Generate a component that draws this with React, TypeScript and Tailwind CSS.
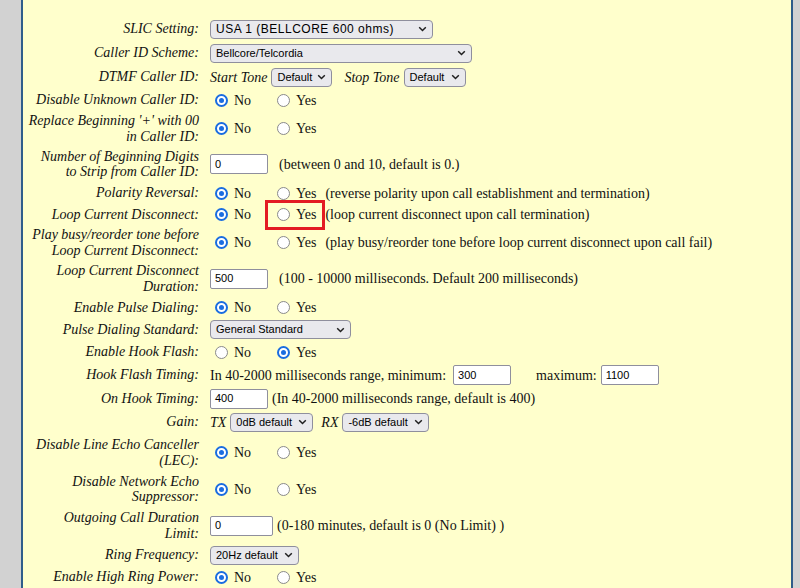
import type { ReactNode } from 'react'

const serif = "font-['Liberation_Serif',serif]"
const sans = "font-['Liberation_Sans',Arial,sans-serif]"

function Chevron() {
  return (
    <svg width="9" height="6" viewBox="0 0 9 6" className="ml-[4px] shrink-0">
      <path d="M1.2 1.3l3.3 3.2 3.3-3.2" fill="none" stroke="#1f1f1f" strokeWidth="1.5" />
    </svg>
  )
}

function Select({ text, w, t = 'text-[11px]' }: { text: string; w: string; t?: string }) {
  return (
    <span
      className={`inline-flex h-[19px] shrink-0 items-center justify-between rounded-[4px] border border-[#8f8f9d] bg-[#e9e9ed] pl-[5px] pr-[5px] leading-none text-black ${sans} ${w}`}
    >
      <span className={t}>{text}</span>
      <Chevron />
    </span>
  )
}

function Field({ value, w }: { value: string; w: string }) {
  return (
    <span
      className={`inline-flex h-[20px] shrink-0 items-center rounded-[2px] border border-[#8f8f9d] bg-white pl-[4px] text-[11px] leading-none text-black ${sans} ${w}`}
    >
      {value}
    </span>
  )
}

function Radio({ on }: { on: boolean }) {
  if (on)
    return (
      <span className="ml-[5px] box-border flex h-[13px] w-[13px] shrink-0 items-center justify-center rounded-full border-2 border-[#1a6de0] bg-white">
        <span className="h-[5px] w-[5px] rounded-full bg-[#1a6de0]" />
      </span>
    )
  return <span className="ml-[5px] box-border h-[13px] w-[13px] shrink-0 rounded-full border-[1.5px] border-[#8a8a8a] bg-white" />
}

function YesNo({ yes = false, note, boxed = false }: { yes?: boolean; note?: string; boxed?: boolean }) {
  return (
    <div className="flex items-center">
      <span className="flex w-[62px] items-center">
        <Radio on={!yes} />
        <span className="ml-[6px]">No</span>
      </span>
      <span className="relative flex items-center">
        <Radio on={yes} />
        <span className="ml-[6px]">Yes</span>
        {boxed && (
          <span className="absolute left-[-7px] top-1/2 h-[30px] w-[60px] -translate-y-1/2 border-[3px] border-[#e31b23]" />
        )}
      </span>
      {note && <span className="ml-[9px] whitespace-nowrap">{note}</span>}
    </div>
  )
}

function Row({ label, h, children }: { label: ReactNode; h: string; children: ReactNode }) {
  return (
    <div className={`grid grid-cols-[176px_1fr] items-center gap-x-[11px] ${h}`}>
      <div className="whitespace-nowrap text-right italic leading-[15.5px]">{label}</div>
      <div className="flex items-center whitespace-nowrap">{children}</div>
    </div>
  )
}

export default function App() {
  return (
    <div className="h-[588px] w-[800px] overflow-hidden bg-[#d2d2d2] pl-[21px] pr-[7px]">
      <div className={`h-full border-x-2 border-[#2f5d8a] bg-[#ffffcc] pt-[17px] text-[14px] text-[#111] ${serif}`}>
        <Row label="SLIC Setting:" h="h-[24px]">
          <Select text="USA 1 (BELLCORE 600 ohms)" w="w-[223px]" t="text-[12px] tracking-[0.5px]" />
        </Row>
        <Row label="Caller ID Scheme:" h="h-[24px]">
          <Select text="Bellcore/Telcordia" w="w-[262px]" />
        </Row>
        <Row label="DTMF Caller ID:" h="h-[24px]">
          <span className="italic">Start Tone</span>
          <span className="ml-[4px] flex">
            <Select text="Default" w="w-[61px]" />
          </span>
          <span className="ml-[12px] italic">Stop Tone</span>
          <span className="ml-[4px] flex">
            <Select text="Default" w="w-[62px]" />
          </span>
        </Row>
        <Row label="Disable Unknown Caller ID:" h="h-[22px]">
          <YesNo />
        </Row>
        <Row
          label={
            <>
              Replace Beginning &apos;+&apos; with 00
              <br />
              in Caller ID:
            </>
          }
          h="h-[35px]"
        >
          <YesNo />
        </Row>
        <Row
          label={
            <>
              Number of Beginning Digits
              <br />
              to Strip from Caller ID:
            </>
          }
          h="h-[36px]"
        >
          <Field value="0" w="w-[58px]" />
          <span className="ml-[11px]">(between 0 and 10, default is 0.)</span>
        </Row>
        <Row label="Polarity Reversal:" h="h-[22px]">
          <YesNo note="(reverse polarity upon call establishment and termination)" />
        </Row>
        <Row label="Loop Current Disconnect:" h="h-[21px]">
          <YesNo boxed note="(loop current disconnect upon call termination)" />
        </Row>
        <Row
          label={
            <>
              Play busy/reorder tone before
              <br />
              Loop Current Disconnect:
            </>
          }
          h="h-[35px]"
        >
          <YesNo note="(play busy/reorder tone before loop current disconnect upon call fail)" />
        </Row>
        <Row
          label={
            <>
              Loop Current Disconnect
              <br />
              Duration:
            </>
          }
          h="h-[37px]"
        >
          <Field value="500" w="w-[58px]" />
          <span className="ml-[11px]">(100 - 10000 milliseconds. Default 200 milliseconds)</span>
        </Row>
        <Row label="Enable Pulse Dialing:" h="h-[21px]">
          <YesNo />
        </Row>
        <Row label="Pulse Dialing Standard:" h="h-[23px]">
          <Select text="General Standard" w="w-[141px]" />
        </Row>
        <Row label="Enable Hook Flash:" h="h-[22px]">
          <YesNo yes />
        </Row>
        <Row label="Hook Flash Timing:" h="h-[24px]">
          <span>In 40-2000 milliseconds range, minimum:</span>
          <span className="ml-[7px] flex">
            <Field value="300" w="w-[58px]" />
          </span>
          <span className="ml-[25px]">maximum:</span>
          <span className="ml-[4px] flex">
            <Field value="1100" w="w-[58px]" />
          </span>
        </Row>
        <Row label="On Hook Timing:" h="h-[23px]">
          <Field value="400" w="w-[58px]" />
          <span className="ml-[4px]">(In 40-2000 milliseconds range, default is 400)</span>
        </Row>
        <Row label="Gain:" h="h-[24px]">
          <span className="italic">TX</span>
          <span className="ml-[4px] flex">
            <Select text="0dB default" w="w-[83px]" />
          </span>
          <span className="ml-[8px] italic">RX</span>
          <span className="ml-[4px] flex">
            <Select text="-6dB default" w="w-[87px]" />
          </span>
        </Row>
        <Row
          label={
            <>
              Disable Line Echo Canceller
              <br />
              (LEC):
            </>
          }
          h="h-[37px]"
        >
          <YesNo />
        </Row>
        <Row
          label={
            <>
              Disable Network Echo
              <br />
              Suppressor:
            </>
          }
          h="h-[36px]"
        >
          <YesNo />
        </Row>
        <Row
          label={
            <>
              Outgoing Call Duration
              <br />
              Limit:
            </>
          }
          h="h-[37px]"
        >
          <Field value="0" w="w-[63px]" />
          <span className="ml-[4px]">(0-180 minutes, default is 0 (No Limit) )</span>
        </Row>
        <Row label="Ring Frequency:" h="h-[22px]">
          <Select text="20Hz default" w="w-[89px]" />
        </Row>
        <Row label="Enable High Ring Power:" h="h-[22px]">
          <YesNo />
        </Row>
      </div>
    </div>
  )
}
